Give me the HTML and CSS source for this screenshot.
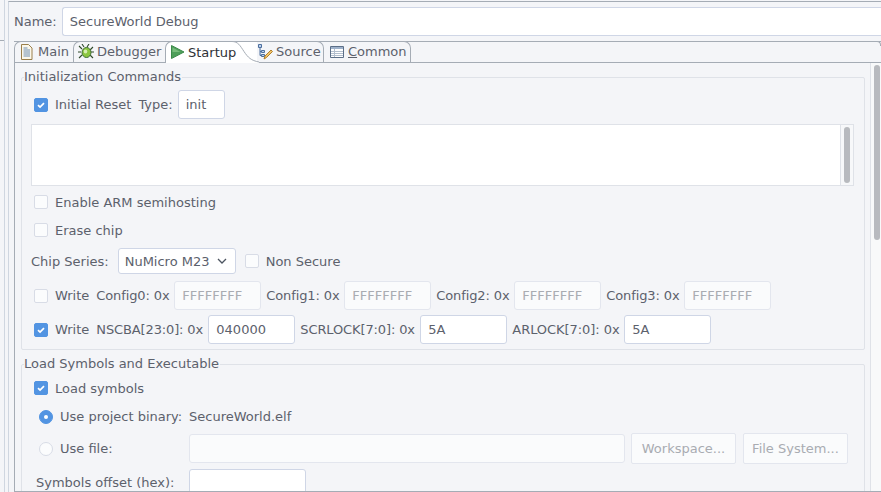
FILE: index.html
```html
<!DOCTYPE html>
<html lang="en">
<head>
<meta charset="utf-8">
<title>Debug Configuration</title>
<link rel="stylesheet" href="styles.css">
</head>
<body>
<div class="window">
  <div class="sidebar"><div class="sidebar-head"></div></div>
  <div class="editor">
    <div class="name-row">
      <span class="label">Name:</span>
      <div class="input name-input">SecureWorld Debug</div>
    </div>
    <div class="folder">
      <div class="tabs">
        <div class="tab tab-main">
          <svg class="ico" viewBox="0 0 16 16"><path d="M2.500 .5h7l3.500 3.500v11.500h-10.500z" fill="#fbf7ea" stroke="#9a7f4a"/><path d="M4.500 4h4M4.500 6h6.500M4.500 8h6.500M4.500 10h6.500M4.500 12h6.500" stroke="#6f8fb4"/></svg>
          <span>Main</span>
        </div>
        <div class="tab tab-debugger">
          <svg class="ico" viewBox="0 0 16 16"><path d="M1 2l3 3M15 3l-3 3M0 8h3M16 8h-3M1 14l3-3M15 14l-3-3M4 0l2 3M11 0l-2 3" stroke="#2f4a2a" stroke-width="1.100"/><ellipse cx="8.500" cy="8.500" rx="4.500" ry="5" fill="#8cc63f" stroke="#3d6b33"/><ellipse cx="7.500" cy="7.500" rx="1.800" ry="2" fill="#d7eeb0"/></svg>
          <span>Debugger</span>
        </div>
        <div class="tab tab-startup">
          <svg class="ico" viewBox="0 0 16 16"><path d="M1.500 1.500l12.500 6.500-12.500 6.500z" fill="#4f9f5a" stroke="#3c8a4a"/><path d="M2.500 3.500l8 4.500h-8z" fill="#79bd7c"/></svg>
          <span class="tab-text">Startup</span>
          <svg class="tab-curve" viewBox="0 0 30 22"><path d="M0 .5h3c6 0 8 4 12 10s7 9 15 10.500v1H0z" fill="#fff"/><path d="M0 .5h3c6 0 8 4 12 10s7 9 15 10.500" fill="none" stroke="#a5acb5"/></svg>
        </div>
        <div class="tab tab-source">
          <svg class="ico" viewBox="0 0 16 16"><path d="M1.500 .5h3v3h-3zM4.500 6.500h3v2h-3zM4.500 10.500h3v2h-3zM3 3.500v8h1.500M3 7.500h1.500" fill="#bcd0ea" stroke="#4c6f9f"/><path d="M7 15l1-3 6-6 1.500 1.500-6 6z" fill="#f2c46a" stroke="#b07f2c"/></svg>
          <span>Source</span>
        </div>
        <div class="tab tab-common">
          <svg class="ico" viewBox="0 0 16 16"><path d="M1.500 2.500h13v11h-13z" fill="#fff" stroke="#5c6f88"/><path d="M2 3h12v2H2z" fill="#9fb2cb"/><path d="M2 7.500h12M2 9.500h12M2 11.500h12M5.500 5v8" stroke="#b3bfce"/></svg>
          <span><u>C</u>ommon</span>
        </div>
      </div>
      <div class="pane">
        <div class="scroller">
          <fieldset class="group group-init">
            <legend>Initialization Commands</legend>
            <div class="row row-reset">
              <span class="check on"><svg viewBox="0 0 14 14"><path d="M3.500 7.200l2.400 2.300 4.600-4.700" fill="none" stroke="#fff" stroke-width="2"/></svg></span>
              <span class="label">Initial Reset</span>
              <span class="label">Type:</span>
              <div class="input w-init">init</div>
            </div>
            <div class="textarea"><div class="ta-bar"><i></i></div></div>
            <div class="row row-semi">
              <span class="check"></span>
              <span class="label">Enable ARM semihosting</span>
            </div>
            <div class="row row-erase">
              <span class="check"></span>
              <span class="label">Erase chip</span>
            </div>
            <div class="row row-chip">
              <span class="label">Chip Series:</span>
              <div class="select">NuMicro M23<svg viewBox="0 0 10 6"><path d="M1 1l4 4 4-4" fill="none" stroke="#4c5460" stroke-width="1.300"/></svg></div>
              <span class="check"></span>
              <span class="label">Non Secure</span>
            </div>
            <div class="row row-cfg">
              <span class="check"></span>
              <span class="label">Write</span>
              <span class="label l-cfg l-first">Config0: 0x</span>
              <div class="input off w-cfg">FFFFFFFF</div>
              <span class="label l-cfg">Config1: 0x</span>
              <div class="input off w-cfg">FFFFFFFF</div>
              <span class="label l-cfg">Config2: 0x</span>
              <div class="input off w-cfg">FFFFFFFF</div>
              <span class="label l-cfg">Config3: 0x</span>
              <div class="input off w-cfg">FFFFFFFF</div>
            </div>
            <div class="row row-lock">
              <span class="check on"><svg viewBox="0 0 14 14"><path d="M3.500 7.200l2.400 2.300 4.600-4.700" fill="none" stroke="#fff" stroke-width="2"/></svg></span>
              <span class="label">Write</span>
              <span class="label l-nscba l-first">NSCBA[23:0]: 0x</span>
              <div class="input w-cfg">040000</div>
              <span class="label l-scr">SCRLOCK[7:0]: 0x</span>
              <div class="input w-cfg">5A</div>
              <span class="label l-ar">ARLOCK[7:0]: 0x</span>
              <div class="input w-cfg">5A</div>
            </div>
          </fieldset>
          <fieldset class="group group-load">
            <legend>Load Symbols and Executable</legend>
            <div class="row row-load">
              <span class="check on"><svg viewBox="0 0 14 14"><path d="M3.500 7.200l2.400 2.300 4.600-4.700" fill="none" stroke="#fff" stroke-width="2"/></svg></span>
              <span class="label">Load symbols</span>
            </div>
            <div class="grid-file">
              <div class="radio-cell"><span class="radio on"></span><span class="label">Use project binary:</span></div>
              <span class="label">SecureWorld.elf</span>
              <div class="radio-cell radio-file"><span class="radio"></span><span class="label">Use file:</span></div>
              <div class="file-ctl">
                <div class="input off file-input"></div>
                <div class="button">Workspace...</div>
                <div class="button b-fs">File System...</div>
              </div>
              <span class="label l-offset">Symbols offset (hex):</span>
              <div class="input w-offset"></div>
            </div>
          </fieldset>
        </div>
        <div class="page-bar"><i></i></div>
      </div>
    </div>
  </div>
</div>
</body>
</html>
```

FILE: styles.css
```css
* { box-sizing: border-box; }
html, body { margin: 0; height: 100%; overflow: hidden; }
body {
  background: #f4f5f8;
  font-family: "DejaVu Sans", sans-serif;
  font-size: 13px;
  color: #5c616c;
}
.window { display: flex; width: 881px; height: 492px; overflow: hidden; }
.sidebar {
  width: 5px;
  border-right: 1px solid #cfd6e0;
  flex: none;
}
.sidebar-head { height: 41px; border-bottom: 1px solid #a5acb5; }
.editor {
  margin-left: 3px;
  flex: 1;
  min-width: 0;
  border-left: 1px solid #cfd6e0;
  border-top: 1px solid #a5acb5;
  margin-top: 1px;
  padding: 5px 0 0 5px;
  display: flex;
  flex-direction: column;
}
.label { white-space: nowrap; }
.name-row { display: flex; align-items: center; gap: 5px; height: 29px; flex: none; }
.input {
  height: 29px;
  background: #fff;
  border: 1px solid #cfd6e6;
  border-radius: 3px;
  padding: 0 7px;
  line-height: 27px;
  color: #5c616c;
  flex: none;
}
.input.off { background: #fafbfc; border-color: #e3e6ee; color: #a9acb2; }
.name-input { flex: 1; border-right: 0; border-radius: 3px 0 0 3px; }
.folder { flex: 1; min-height: 0; display: flex; flex-direction: column; margin-top: 5px; }
.tabs { display: flex; height: 21px; flex: none; position: relative; border-top: 1px solid #a5acb5; }
.tabs::after {
  content: "";
  position: absolute;
  right: 0;
  top: -1px;
  width: 4px;
  height: 4px;
  background: #f4f5f8;
  border-top: 1px solid #a5acb5;
  border-right: 1px solid #a5acb5;
  border-radius: 0 4px 0 0;
}
.tab {
  height: 21px;
  margin-top: -1px;
  display: flex;
  align-items: center;
  gap: 3px;
  padding: 0 0 1px 4px;
  background: #f4f5f8;
  white-space: nowrap;
  border: 1px solid #a5acb5;
  border-bottom: 0;
  border-right: 0;
  border-radius: 7px 0 0 0;
}
.ico { width: 16px; height: 16px; flex: none; }
.tab-main { width: 59px; }
.tab-debugger { width: 92px; }
.tab-startup {
  width: 92px;
  gap: 2px;
  background: #fff;
  color: #2e3136;
  position: relative;
  z-index: 2;
  height: 22px;
  border-radius: 7px 0 0 0;
  border-right: 0;
  background-clip: padding-box;
}
.tab-text { position: relative; z-index: 1; }
.tab-curve { position: absolute; left: 63px; top: -1px; width: 30px; height: 22px; }
.tab-source {
  width: 67px;
  padding-left: 0;
  border-left: 0;
  border-right: 1px solid #a5acb5;
  border-radius: 0 7px 0 0;
}
.tab-common {
  width: 87px;
  padding-left: 5px;
  border-left: 0;
  border-right: 1px solid #a5acb5;
  border-radius: 0 7px 0 0;
}
.pane {
  flex: 1;
  min-height: 0;
  display: flex;
  border-top: 1px solid #a5acb5;
  border-left: 1px solid #a5acb5;
  border-bottom: 1px solid #a5acb5;
}
.scroller { flex: 1; min-width: 0; overflow: hidden; padding: 6px 5px 0 6px; }
.page-bar {
  width: 11px;
  flex: none;
  background: #f8f9fa;
  border-left: 1px solid #dfe2e8;
  padding: 2px 1px 0 3px;
}
.page-bar i { display: block; width: 6px; height: 175px; background: #b8babf; border-radius: 3px; }
.group {
  margin: 0;
  padding: 0 10px 0 9px;
  border: 1px solid #dfe2e8;
  border-radius: 2px;
  min-width: 0;
}
.group legend { padding: 0 1px 0 0; margin-left: -7px; line-height: 16px; white-space: nowrap; }
.group-init { height: 281px; }
.group-load { margin-top: 6px; height: 200px; }
.row { display: flex; align-items: center; }
.check {
  width: 14px;
  height: 14px;
  margin-left: 3px;
  margin-right: 7px;
  background: #fbfcfd;
  border: 1px solid #d8dce6;
  border-radius: 2px;
  flex: none;
  display: flex;
}
.check.on { background: #5294e2; border-color: #5294e2; }
.check svg { width: 12px; height: 12px; }
.row-reset { height: 29px; margin-top: 5px; }
.row-reset .label + .label { margin-left: 7px; margin-right: 5px; }
.w-init { width: 47px; }
.textarea {
  height: 62px;
  margin-top: 5px;
  background: #fff;
  border: 1px solid #dfe2e8;
  display: flex;
  justify-content: flex-end;
}
.ta-bar { width: 13px; border-left: 1px solid #dfe2e8; padding: 2px 3px 0 3px; background: #f7f8fa; }
.ta-bar i { display: block; width: 6px; height: 56px; background: #b8babf; border-radius: 3px; }
.row-semi { height: 18px; margin-top: 7px; }
.row-erase { height: 18px; margin-top: 10px; }
.row-chip { height: 26px; margin-top: 9px; }
.select {
  width: 118px;
  height: 26px;
  margin-left: 9px;
  margin-right: 9px;
  padding: 0 6px;
  background: #fff;
  border: 1px solid #cfd6e6;
  border-radius: 3px;
  display: flex;
  align-items: center;
  justify-content: space-between;
  white-space: nowrap;
}
.select svg { width: 10px; height: 6px; margin-right: 2px; }
.row-chip .check { margin-left: 0; }
.row-cfg { height: 29px; margin-top: 7px; gap: 5px; }
.row-cfg .check, .row-lock .check { margin-right: 2px; }
.row-lock { height: 29px; margin-top: 5px; gap: 5px; }
.l-first { margin-left: 2px; }
.l-cfg { width: 73px; letter-spacing: -0.12px; }
.l-nscba { width: 107px; letter-spacing: -0.13px; }
.l-scr { width: 115px; letter-spacing: -0.12px; }
.l-ar { width: 107px; letter-spacing: -0.06px; }
.w-cfg { width: 87px; }
.row-load { height: 18px; margin-top: 7px; }
.grid-file {
  display: grid;
  grid-template-columns: 158px 1fr;
  align-items: center;
  margin-top: 5px;
}
.radio-cell { display: flex; align-items: center; gap: 7px; padding-left: 8px; height: 29px; }
.radio-file { margin-top: 2px; }
.radio {
  width: 14px;
  height: 14px;
  border-radius: 50%;
  background: #fbfcfd;
  border: 1px solid #d8dce6;
  flex: none;
  position: relative;
}
.radio.on { background: #5294e2; border-color: #5294e2; }
.radio.on::after {
  content: "";
  position: absolute;
  left: 4px;
  top: 4px;
  width: 4px;
  height: 4px;
  border-radius: 50%;
  background: #fff;
}
.file-ctl { display: flex; align-items: center; gap: 6px; margin-top: 2px; margin-right: 6px; }
.file-input { flex: 1; min-width: 0; }
.button {
  width: 105px;
  height: 31px;
  line-height: 29px;
  background: #fafbfc;
  border: 1px solid #e3e6ee;
  border-radius: 2px;
  color: #a9acb2;
  text-align: center;
  white-space: nowrap;
  flex: none;
}
.b-fs { margin-left: 1px; }
.l-offset { padding-left: 5px; padding-top: 2px; }
.w-offset { width: 117px; margin-top: 5px; }
```
